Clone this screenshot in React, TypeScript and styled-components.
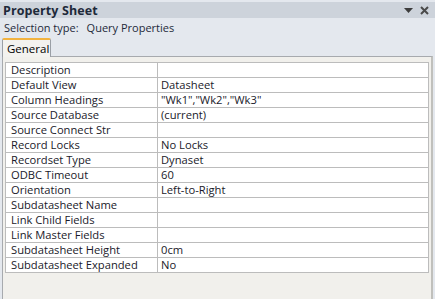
import styled, { createGlobalStyle } from 'styled-components';

const GlobalStyle = createGlobalStyle`
  html, body {
    margin: 0;
    padding: 0;
    background: #e9ecf0;
  }
  body {
    font-family: 'Open Sans', 'Noto Sans', sans-serif;
    font-size: 11px;
    color: #1a1a1a;
  }
`;

const properties: [string, string][] = [
  ['Description', ''],
  ['Default View', 'Datasheet'],
  ['Column Headings', '"Wk1","Wk2","Wk3"'],
  ['Source Database', '(current)'],
  ['Source Connect Str', ''],
  ['Record Locks', 'No Locks'],
  ['Recordset Type', 'Dynaset'],
  ['ODBC Timeout', '60'],
  ['Orientation', 'Left-to-Right'],
  ['Subdatasheet Name', ''],
  ['Link Child Fields', ''],
  ['Link Master Fields', ''],
  ['Subdatasheet Height', '0cm'],
  ['Subdatasheet Expanded', 'No'],
];

const App = () => {
  return (
    <>
      <GlobalStyle />
      <Pane>
        <TitleBar>
          <Title>Property Sheet</Title>
          <TitleButtons>
            <svg width="9" height="5" viewBox="0 0 9 5">
              <path d="M0 0 H9 L4.5 5 Z" fill="#3c3c3c" />
            </svg>
            <svg width="9" height="9" viewBox="0 0 9 9">
              <path d="M1 1 L8 8 M8 1 L1 8" stroke="#4a4a4a" strokeWidth="2" />
            </svg>
          </TitleButtons>
        </TitleBar>
        <SelectionLine>
          <span>Selection type:</span>
          <span>Query Properties</span>
        </SelectionLine>
        <TabStrip>
          <Tab>General</Tab>
        </TabStrip>
        <TabBody>
          <Grid>
            {properties.map(([name, value]) => (
              <Row key={name}>
                <NameCell>{name}</NameCell>
                <ValueCell>{value}</ValueCell>
              </Row>
            ))}
          </Grid>
        </TabBody>
      </Pane>
    </>
  );
};

export default App;

// 전체 창
const Pane = styled.div`
  width: 435px;
  height: 299px;
  display: flex;
  flex-direction: column;
  background: #e4e8ee;
  padding-top: 2px;
  box-sizing: border-box;
  overflow: hidden;
`;

const TitleBar = styled.div`
  height: 16px;
  display: flex;
  align-items: center;
  justify-content: space-between;
  background: #cdd3db;
  padding: 0 6px 0 3px;
`;

const Title = styled.div`
  font-weight: 700;
  font-size: 12.5px;
  color: #1e2a3a;
  letter-spacing: 0.1px;
`;

const TitleButtons = styled.div`
  display: flex;
  align-items: center;
  gap: 7px;
`;

const SelectionLine = styled.div`
  height: 18px;
  display: flex;
  align-items: center;
  gap: 8px;
  padding-left: 4px;
  color: #1e2a3a;
`;

const TabStrip = styled.div`
  display: flex;
  padding-left: 2px;
  height: 20px;
  align-items: flex-end;
`;

const Tab = styled.div`
  width: 49px;
  height: 19px;
  box-sizing: border-box;
  background: #f3f2ef;
  border: 1px solid #9a9fa6;
  border-top: 2px solid #f2b340;
  border-bottom: none;
  border-radius: 2px 2px 0 0;
  padding: 1px 0 0 4px;
  font-size: 11.5px;
  color: #000;
  position: relative;
  margin-bottom: -1px;
  z-index: 1;
`;

const TabBody = styled.div`
  flex: 1;
  margin: 0 2px 0 2px;
  background: #f1f0ec;
  border: 1px solid #a7aaae;
  border-bottom: none;
  border-right: 2px solid #c0c0bc;
  padding: 5px 2px 0 2px;
`;

const Grid = styled.div`
  display: grid;
  grid-template-columns: 152px 1fr;
  background: #ffffff;
  border-left: 1px solid #bcbcbc;
  border-right: 1px solid #bcbcbc;
  border-top: 1px solid #bcbcbc;
`;

const Row = styled.div`
  display: contents;
`;

const NameCell = styled.div`
  height: 14px;
  line-height: 14px;
  padding-left: 5px;
  border-bottom: 1px solid #bcbcbc;
  border-right: 1px solid #bcbcbc;
  color: #1a1a2a;
  font-size: 11.2px;
  white-space: nowrap;
`;

const ValueCell = styled.div`
  height: 14px;
  line-height: 14px;
  padding-left: 3px;
  border-bottom: 1px solid #bcbcbc;
  color: #1a1a2a;
  font-size: 11.2px;
  white-space: nowrap;
`;
